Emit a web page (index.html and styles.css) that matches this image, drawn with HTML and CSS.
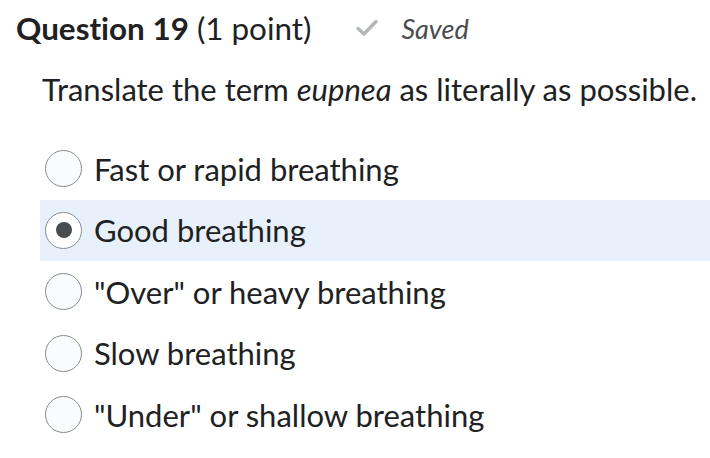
FILE: index.html
```html
<!DOCTYPE html>
<html>
<head>
<meta charset="utf-8">
<link rel="stylesheet" href="styles.css">
</head>
<body>
<div class="q">
  <div class="head">
    <h2 class="title"><strong>Question 19</strong> <span class="pts">(1 point)</span></h2>
    <span class="saved">
      <svg class="check" width="24" height="20" viewBox="0 0 24 20"><path d="M3 10.5 L9 16 L21 3.5" fill="none" stroke="#b3b7ba" stroke-width="3.4" stroke-linecap="round" stroke-linejoin="round"/></svg>
      <em>Saved</em>
    </span>
  </div>
  <p class="prompt">Translate the term <em>eupnea</em> as literally as possible.</p>
  <div class="opts">
    <label class="opt"><span class="radio"></span><span class="lbl">Fast or rapid breathing</span></label>
    <label class="opt sel"><span class="radio on"></span><span class="lbl">Good breathing</span></label>
    <label class="opt"><span class="radio"></span><span class="lbl">"Over" or heavy breathing</span></label>
    <label class="opt"><span class="radio"></span><span class="lbl">Slow breathing</span></label>
    <label class="opt"><span class="radio"></span><span class="lbl">"Under" or shallow breathing</span></label>
  </div>
</div>
</body>
</html>
```
FILE: styles.css
```css
html, body { margin: 0; padding: 0; background: #fff; }
body { font-family: Lato, "Noto Sans", sans-serif; color: #202122; font-variant-ligatures: none; }
.q { padding: 0 0 0 16px; }
.head { display: flex; align-items: center; height: 56px; }
.title { margin: 0; font-size: 31.4px; font-weight: 400; }
.title strong { font-weight: 700; }
.saved { display: flex; align-items: center; margin-left: 44px; color: #494c4e; font-size: 27px; }
.check { margin-right: 22px; }
.prompt { margin: 15px 0 0 26px; font-size: 31px; line-height: 36px; }
.opts { margin: 31px 0 0 24px; }
.opt { display: flex; align-items: center; height: 61.5px; font-size: 31px; }
.opt.sel { background: #e8f1fb; }
.radio { width: 37px; height: 37px; border: 1.5px solid #868c8f; border-radius: 50%; background: #f9fbff; margin: 0 12px 0 5px; box-sizing: border-box; display: flex; align-items: center; justify-content: center; flex: none; }
.radio.on { background: #fff; }
.radio.on::after { content: ""; width: 16px; height: 16px; border-radius: 50%; background: #494c4e; }
```
